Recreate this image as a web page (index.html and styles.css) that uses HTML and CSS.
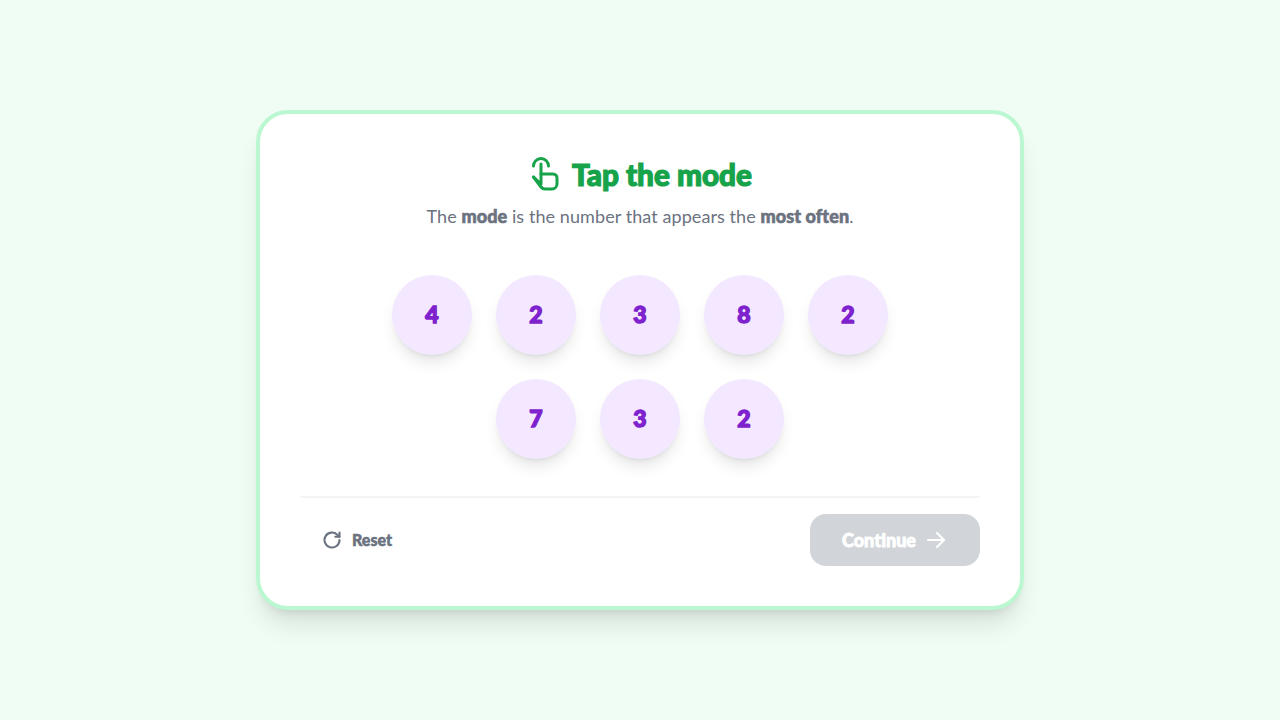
FILE: index.html
```html
<!DOCTYPE html>
<html lang="en">
<head>
    <meta charset="UTF-8">
    <title>Tap the mode</title>
    <link rel="stylesheet" href="styles.css">
</head>
<body>
    <main class="card">
        <header class="header">
            <h1 class="title">
                <svg class="title-icon" viewBox="0 0 30 36" fill="none" stroke="currentColor" stroke-width="3" stroke-linecap="round" stroke-linejoin="round">
                    <path d="M3.500 10a7.500 7.500 0 0 1 15 0"/>
                    <path d="M11 8v20l-7.500 -7"/>
                    <path d="M11 18h12a4 4 0 0 1 4 4v6a5 5 0 0 1 -5 5h-7a5 5 0 0 1 -4 -2l-7.500 -10"/>
                </svg>
                Tap the mode
            </h1>
            <p class="subtitle">The <b>mode</b> is the number that appears the <b>most often</b>.</p>
        </header>

        <div class="numbers">
            <button class="number">4</button>
            <button class="number">2</button>
            <button class="number">3</button>
            <button class="number">8</button>
            <button class="number">2</button>
            <button class="number">7</button>
            <button class="number">3</button>
            <button class="number">2</button>
        </div>

        <footer class="footer">
            <button class="reset">
                <svg class="reset-icon" viewBox="0 0 24 24" fill="none" stroke="currentColor" stroke-width="2.500" stroke-linecap="round" stroke-linejoin="round">
                    <path d="M21 12a9 9 0 1 1 -2.700 -6.400l2.700 2.400"/>
                    <path d="M21 3v5h-5"/>
                </svg>
                <span class="reset-label">Reset</span>
            </button>
            <button class="continue">
                Continue
                <svg class="continue-icon" viewBox="0 0 24 24" fill="none" stroke="currentColor" stroke-width="2" stroke-linecap="round" stroke-linejoin="round">
                    <path d="M4 12h16"/>
                    <path d="M13 5l7 7l-7 7"/>
                </svg>
            </button>
        </footer>
    </main>
</body>
</html>
```

FILE: styles.css
```css
body {
    margin: 0;
    height: 720px;
    overflow: hidden;
    background-color: #f0fdf4;
    font-family: Lato, "Open Sans", sans-serif;
    display: flex;
    align-items: center;
    justify-content: center;
}

.card {
    box-sizing: border-box;
    width: 768px;
    height: 500px;
    padding: 40px;
    background-color: white;
    border: 4px solid #bbf7d0;
    border-radius: 32px;
    box-shadow: 0 20px 25px -5px rgba(0, 0, 0, 0.1), 0 8px 10px -6px rgba(0, 0, 0, 0.1);
    display: flex;
    flex-direction: column;
}

.header {
    text-align: center;
}

.title {
    margin: 0;
    padding-left: 2px;
    height: 40px;
    display: flex;
    align-items: center;
    justify-content: center;
    gap: 12px;
    color: #16a34a;
    font-size: 29.700px;
    font-weight: 900;
    -webkit-text-stroke: 1.2px #16a34a;
}

.title-icon {
    width: 30px;
    height: 36px;
}

.subtitle {
    margin: 8px 0 0;
    color: #6b7280;
    font-size: 18px;
    line-height: 28px;
    letter-spacing: 0.08px;
}

.subtitle b {
    font-weight: 900;
    -webkit-text-stroke: 0.6px #6b7280;
}

.numbers {
    width: 520px;
    margin: 45px auto 0;
    display: flex;
    flex-wrap: wrap;
    justify-content: center;
    gap: 24px;
}

.number {
    width: 80px;
    height: 80px;
    padding: 0 0 2px;
    border: none;
    border-radius: 50%;
    background-color: #f3e8ff;
    color: #7e22ce;
    font-family: inherit;
    font-size: 23px;
    font-weight: 900;
    -webkit-text-stroke: 1.4px #7e22ce;
    box-shadow: 0 10px 15px -3px rgba(0, 0, 0, 0.1), 0 4px 6px -4px rgba(0, 0, 0, 0.1);
}

.footer {
    margin-top: 37px;
    padding-top: 16px;
    border-top: 2px solid #f3f4f6;
    display: flex;
    align-items: center;
    justify-content: space-between;
}

.reset {
    padding: 12px 22px;
    border: none;
    background: none;
    color: #6b7280;
    font-family: inherit;
    font-size: 16px;
    font-weight: 900;
    -webkit-text-stroke: 0.5px #6b7280;
    display: flex;
    align-items: center;
    gap: 10px;
}

.reset-label {
    margin-top: -1px;
}

.reset-icon {
    width: 20px;
    height: 20px;
}

.continue {
    width: 170px;
    height: 52px;
    border: none;
    border-radius: 16px;
    background-color: #d1d5d9;
    color: white;
    font-family: inherit;
    font-size: 18px;
    font-weight: 900;
    -webkit-text-stroke: 0.8px white;
    display: flex;
    align-items: center;
    justify-content: center;
    gap: 8px;
}

.continue-icon {
    width: 24px;
    height: 24px;
}
```
